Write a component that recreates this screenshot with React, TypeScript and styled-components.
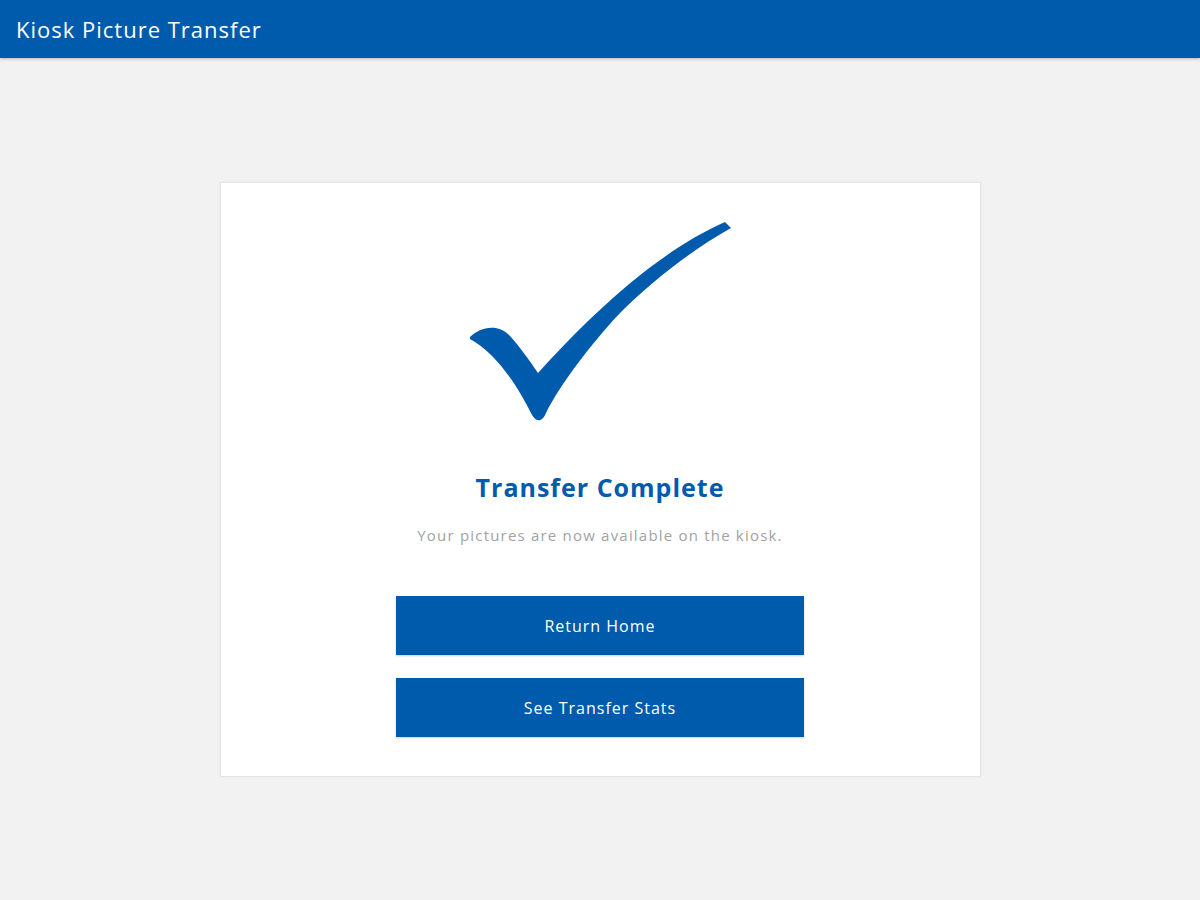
import styled, { createGlobalStyle } from "styled-components";

const brand = "#005bac";

const GlobalStyle = createGlobalStyle`
  html, body {
    margin: 0;
    padding: 0;
    background: #f2f2f2;
    font-family: "Open Sans", Lato, sans-serif;
  }
`;

const Page = styled.div`
  min-height: 900px;
  display: flex;
  flex-direction: column;
`;

const Header = styled.header`
  height: 58px;
  background: ${brand};
  display: flex;
  align-items: center;
  padding-left: 16px;
  box-shadow: 0 1px 3px rgba(0, 0, 0, 0.25);
`;

const Title = styled.h1`
  margin: 0;
  color: #fff;
  font-size: 22px;
  font-weight: 400;
  letter-spacing: 1px;
`;

const Main = styled.main`
  display: flex;
  justify-content: center;
  padding-top: 124px;
`;

const Card = styled.section`
  box-sizing: border-box;
  width: 761px;
  height: 595px;
  background: #fff;
  border: 1px solid #e4e4e4;
  box-shadow: 0 0 2px rgba(0, 0, 0, 0.06);
  display: flex;
  flex-direction: column;
  align-items: center;
  padding-top: 32px;
`;

const Check = styled.svg`
  width: 280px;
  height: 210px;
  display: block;
`;

const Heading = styled.h2`
  margin: 46px 0 0;
  color: ${brand};
  font-size: 25px;
  font-weight: 700;
  line-height: 32px;
  letter-spacing: 1px;
`;

const Message = styled.p`
  margin: 22px 0 0;
  color: #a2a2a2;
  font-size: 15px;
  line-height: 20px;
  letter-spacing: 1.2px;
`;

const Actions = styled.div`
  margin-top: 51px;
  display: flex;
  flex-direction: column;
  gap: 23px;
`;

const Button = styled.button`
  width: 408px;
  height: 59px;
  border: none;
  border-radius: 0;
  background: ${brand};
  color: #fff;
  font-family: inherit;
  font-size: 16px;
  letter-spacing: 1px;
  cursor: pointer;
  box-shadow: 0 1px 2px rgba(0, 0, 0, 0.2);
`;

const App = () => (
  <Page>
    <GlobalStyle />
    <Header>
      <Title>Kiosk Picture Transfer</Title>
    </Header>
    <Main>
      <Card>
        <Check viewBox="0 0 280 210">
          {/* swoosh tick: hooked left arm, long tapering right stroke */}
          <path
            fill={brand}
            d="M10,122 C20,112 38,108 50,121 C60,132 70,146 78,158 C120,112 190,40 265,7 L271,13 C230,36 190,68 160,98 C130,130 100,170 86,198 C84,203 81,206 78,205 C76,205 74,203 72,200 C62,180 40,140 10,124 Z"
          />
        </Check>
        <Heading>Transfer Complete</Heading>
        <Message>Your pictures are now available on the kiosk.</Message>
        <Actions>
          <Button>Return Home</Button>
          <Button>See Transfer Stats</Button>
        </Actions>
      </Card>
    </Main>
  </Page>
);

export default App;
